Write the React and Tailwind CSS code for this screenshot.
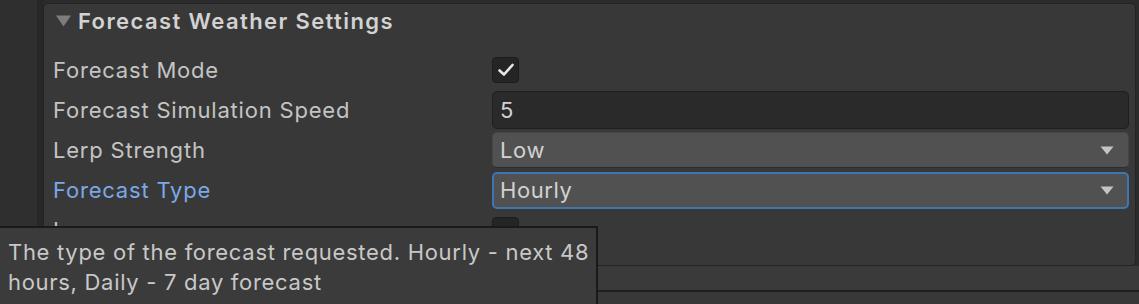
import React from "react";

const font = { fontFamily: "Inter, 'Noto Sans', sans-serif" };

function Arrow() {
  return (
    <svg width="14" height="9" viewBox="0 0 14 9" className="shrink-0">
      <path d="M0.5 0.5 H13.5 L7 8.5 Z" fill="#c4c4c4" />
    </svg>
  );
}

function Checkbox({ checked }) {
  return (
    <div className="w-[27px] h-[26px] rounded-[4px] bg-[#252525] border border-[#1c1c1c] flex items-center justify-center">
      {checked && (
        <svg width="18" height="16" viewBox="0 0 18 16">
          <path d="M2.5 8.5 L7 12.5 L15.5 3" stroke="#e8e8e8" strokeWidth="2.6" fill="none" strokeLinecap="round" strokeLinejoin="round" />
        </svg>
      )}
    </div>
  );
}

function Row({ label, blue, children }) {
  return (
    <div className="flex items-center h-[40px]">
      <div className={`w-[448px] pl-[9px] text-[22px] tracking-[0.8px] leading-none ${blue ? "text-[#7ba8e6]" : "text-[#c4c4c4]"}`}>{label}</div>
      <div className="flex-1 flex items-center">{children}</div>
    </div>
  );
}

export default function App() {
  return (
    <div className="relative w-[1139px] h-[304px] overflow-hidden bg-[#303030]" style={font}>
      <div className="flex h-[266px]">
        <div className="w-[37px] bg-[#2f2f2f]" />
        <div className="w-[6px] bg-[#272727]" />
        <div className="flex-1 flex flex-col pt-[3px] pr-[3px] bg-[#2b2b2b]">
          <div className="flex-1 bg-[#383838] border border-[#242424] rounded-[5px] pr-[6px]">
            <div className="flex items-center h-[34px] pl-[12px] gap-[7px]">
              <svg width="15" height="12" viewBox="0 0 15 12">
                <path d="M0 0.5 H15 L7.5 11.5 Z" fill="#7d7d7d" />
              </svg>
              <span className="text-[22px] font-semibold text-[#d2d2d2] tracking-[1.4px]">Forecast Weather Settings</span>
            </div>
            <div className="h-[12px]" />
            <Row label="Forecast Mode"><Checkbox checked /></Row>
            <Row label="Forecast Simulation Speed">
              <div className="w-full h-[38px] rounded-[5px] bg-[#2a2a2a] border border-[#1f1f1f] flex items-center pl-[7px] text-[22px] tracking-[0.6px] text-[#d2d2d2]">5</div>
            </Row>
            <Row label="Lerp Strength">
              <div className="w-full h-[36px] rounded-[5px] bg-[#515151] border border-[#464646] border-b-[#2c2c2c] flex items-center justify-between pl-[7px] pr-[14px] text-[22px] tracking-[0.6px] text-[#d2d2d2]">
                <span>Low</span>
                <Arrow />
              </div>
            </Row>
            <Row label="Forecast Type" blue>
              <div className="w-full h-[37px] rounded-[5px] bg-[#515151] border-2 border-[#3f74b5] flex items-center justify-between pl-[6px] pr-[13px] text-[22px] tracking-[0.6px] text-[#d2d2d2]">
                <span>Hourly</span>
                <Arrow />
              </div>
            </Row>
            <Row label="Loop"><Checkbox /></Row>
          </div>
        </div>
      </div>
      <div className="h-[24px] bg-[#3a3a3a]" />
      <div className="h-[2px] bg-[#1f1f1f]" />
      <div className="h-[12px] bg-[#383838]" />

      <div className="absolute left-0 top-[226px] w-[598px] h-[78px] bg-[#3b3b3b] border-t-2 border-r-2 border-[#1a1a1a] pl-[8px] pt-[9px] text-[22px] tracking-[0.7px] leading-[30px] text-[#c8c8c8] whitespace-nowrap">
        <div>The type of the forecast requested. Hourly - next 48</div>
        <div>hours, Daily - 7 day forecast</div>
      </div>
    </div>
  );
}
